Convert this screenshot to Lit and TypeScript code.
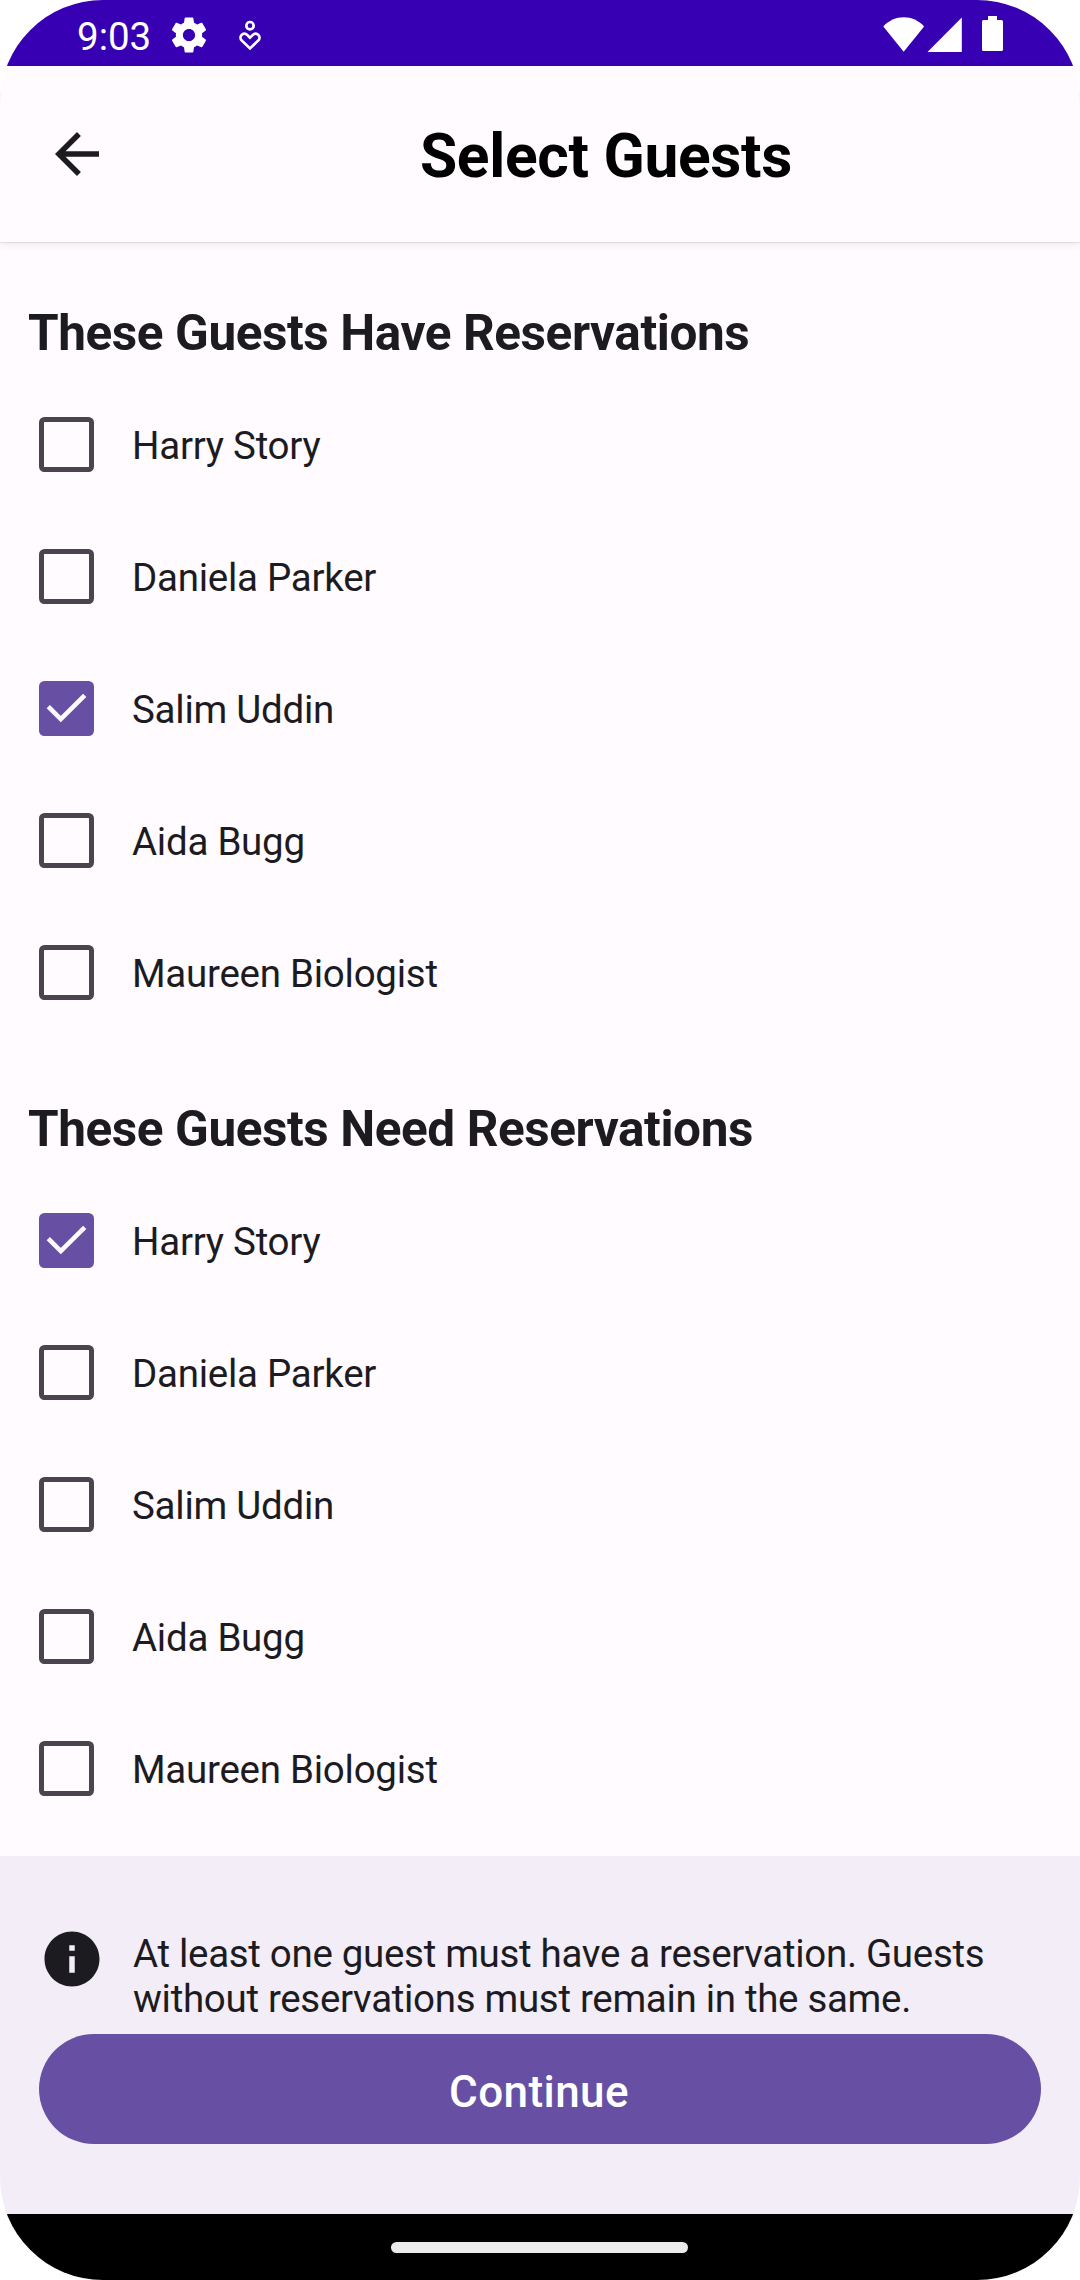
import { LitElement, html, css, nothing } from "lit";
import { customElement, property, state } from "lit/decorators.js";
import { classMap } from "lit/directives/class-map.js";

interface Guest {
  name: string;
  selected: boolean;
}

interface GuestGroup {
  title: string;
  guests: Guest[];
}

const NAMES = ["Harry Story", "Daniela Parker", "Salim Uddin", "Aida Bugg", "Maureen Biologist"];

const makeGroup = (title: string, selected: string): GuestGroup => ({
  title,
  guests: NAMES.map((name) => ({ name, selected: name === selected })),
});

@customElement("status-bar")
export class StatusBar extends LitElement {
  static styles = css`
    :host {
      display: flex;
      justify-content: space-between;
      height: 66px;
      padding: 0 77px;
      background: #3700b3;
      color: #fff;
    }
    .side {
      display: flex;
      align-items: flex-start;
    }
    .clock {
      width: 74px;
      margin-top: 14px;
      font-size: 38.5px;
      line-height: 45px;
      white-space: nowrap;
    }
    svg {
      display: block;
      fill: #fff;
    }
    .gear {
      margin: 14px 0 0 16.5px;
    }
    .care {
      margin: 14px 0 0 19px;
      fill: none;
      stroke: #fff;
      stroke-width: 2.7;
    }
    .wifi {
      margin-top: 17px;
    }
    .signal {
      margin: 17px 0 0 2px;
    }
    .battery {
      margin: 16px 0 0 20px;
    }
  `;

  render() {
    return html`
      <div class="side">
        <span class="clock">9:03</span>
        <svg class="gear" width="42" height="42" viewBox="0 0 24 24">
          <path
            d="M19.43 12.98c.04-.32.07-.64.07-.98s-.03-.66-.07-.98l2.11-1.65c.19-.15.24-.42.12-.64l-2-3.46c-.12-.22-.39-.3-.61-.22l-2.49 1c-.52-.4-1.08-.73-1.69-.98l-.38-2.65C14.46 2.18 14.25 2 14 2h-4c-.25 0-.46.18-.49.42l-.38 2.65c-.61.25-1.17.59-1.69.98l-2.49-1c-.23-.09-.49 0-.61.22l-2 3.46c-.13.22-.07.49.12.64l2.11 1.65c-.04.32-.07.65-.07.98s.03.66.07.98l-2.11 1.65c-.19.15-.24.42-.12.64l2 3.46c.12.22.39.3.61.22l2.49-1c.52.4 1.08.73 1.69.98l.38 2.65c.03.24.24.42.49.42h4c.25 0 .46-.18.49-.42l.38-2.65c.61-.25 1.17-.59 1.69-.98l2.49 1c.23.09.49 0 .61-.22l2-3.46c.12-.22.07-.49-.12-.64l-2.11-1.65zM12 15.5c-1.93 0-3.5-1.57-3.5-3.5s1.57-3.5 3.5-3.5 3.5 1.57 3.5 3.5-1.57 3.5-3.5 3.5z"
          />
        </svg>
        <svg class="care" width="42" height="42" viewBox="0 0 42 42">
          <circle cx="21" cy="11.7" r="3.7" />
          <path d="M21 23.7 L18.16 20.84 A3.9 3.9 0 0 0 12.64 26.36 L21 34.4 L29.36 26.36 A3.9 3.9 0 0 0 23.84 20.84 Z" />
        </svg>
      </div>
      <div class="side">
        <svg class="wifi" width="42" height="35" viewBox="0 0 42 35">
          <path d="M0.3 9.4 C5.6 3.4 13.2 0.2 20.7 0.2 S35.8 3.4 41.1 9.4 L20.7 34.7 Z" />
        </svg>
        <svg class="signal" width="35" height="35" viewBox="0 0 35 35">
          <path d="M0.5 35 L34.8 0.6 V35 Z" />
        </svg>
        <svg class="battery" width="21" height="35" viewBox="0 0 21 35">
          <path d="M6 0 H15 V4 H19.5 Q21 4 21 5.5 V33.5 Q21 35 19.5 35 H1.5 Q0 35 0 33.5 V5.5 Q0 4 1.5 4 H6 Z" />
        </svg>
      </div>
    `;
  }
}

@customElement("top-bar")
export class TopBar extends LitElement {
  @property() heading = "";

  static styles = css`
    :host {
      display: flex;
      align-items: flex-start;
      height: 176px;
      background: #fffbff;
      box-shadow: 0 1px 1px rgba(0, 0, 0, 0.07), 0 3px 8px rgba(0, 0, 0, 0.07);
      position: relative;
    }
    .back {
      display: block;
      margin: 55px 22px 0 44px;
      fill: #1c1b1f;
    }
    h1 {
      flex: 1;
      margin: 55px 0 0;
      text-align: center;
      font-size: 60.5px;
      font-weight: 700;
      line-height: 71px;
      letter-spacing: -0.3px;
      color: #000;
    }
  `;

  render() {
    return html`
      <svg class="back" width="66" height="66" viewBox="0 0 24 24">
        <path d="M20 11H7.83l5.59-5.59L12 4l-8 8 8 8 1.41-1.41L7.83 13H20v-2z" />
      </svg>
      <h1>${this.heading}</h1>
    `;
  }
}

@customElement("guest-row")
export class GuestRow extends LitElement {
  @property() name = "";
  @property({ type: Boolean }) selected = false;

  static styles = css`
    :host {
      display: flex;
      align-items: flex-start;
      height: 132px;
      padding-left: 39px;
      cursor: pointer;
    }
    .box {
      box-sizing: border-box;
      width: 55px;
      height: 55px;
      margin-top: 39px;
      border: 5px solid #49454f;
      border-radius: 5.5px;
    }
    .box.checked {
      border: 0;
      background: #6750a4;
    }
    .box svg {
      display: block;
      fill: none;
      stroke: #fffbff;
      stroke-width: 4.6;
    }
    .label {
      margin: 45px 0 0 38px;
      font-size: 38.5px;
      line-height: 45px;
      letter-spacing: -0.26px;
      color: #1c1b1f;
    }
  `;

  render() {
    return html`
      <div class=${classMap({ box: true, checked: this.selected })}>
        ${this.selected
          ? html`<svg width="55" height="55" viewBox="0 0 55 55"><path d="M9.3 25.6 L21.8 38.1 L45.7 14.3" /></svg>`
          : nothing}
      </div>
      <span class="label">${this.name}</span>
    `;
  }
}

@customElement("app-root")
export class AppRoot extends LitElement {
  @state() private groups: GuestGroup[] = [
    makeGroup("These Guests Have Reservations", "Salim Uddin"),
    makeGroup("These Guests Need Reservations", "Harry Story"),
  ];

  static styles = css`
    :host {
      display: block;
      background: #fff;
      font-family: Roboto, "Liberation Sans", sans-serif;
    }
    .screen {
      display: flex;
      flex-direction: column;
      width: 1080px;
      height: 2280px;
      overflow: hidden;
      border-radius: 103px;
      background: #fffbff;
    }
    .content {
      flex: 1;
    }
    h2 {
      margin: 0;
      padding: 62px 0 16px 28px;
      font-size: 49.5px;
      font-weight: 700;
      line-height: 58px;
      letter-spacing: -0.42px;
      color: #1c1b1f;
    }
    .footer {
      box-sizing: border-box;
      height: 358px;
      padding: 70px 39px 0;
      background: #f3edf7;
    }
    .note {
      display: flex;
      align-items: flex-start;
      height: 108px;
    }
    .info {
      display: block;
      fill: #1c1b1f;
    }
    .note p {
      margin: 5px 0 0 28px;
      font-size: 38.5px;
      line-height: 45px;
      letter-spacing: -0.315px;
      white-space: nowrap;
      color: #1c1b1f;
    }
    .continue {
      display: block;
      box-sizing: border-box;
      width: 100%;
      height: 110px;
      margin: 0;
      padding: 3px 2px 0 0;
      border: 0;
      border-radius: 55px;
      background: #6750a4;
      color: #fff;
      font: 500 44px / 110px Roboto, "Liberation Sans", sans-serif;
      letter-spacing: 0.43px;
      text-align: center;
    }
    .nav {
      display: flex;
      justify-content: center;
      height: 66px;
      padding-right: 1px;
      background: #000;
    }
    .handle {
      width: 297px;
      height: 11px;
      margin-top: 27.5px;
      border-radius: 5.5px;
      background: #ebebeb;
    }
  `;

  private toggle(group: number, index: number) {
    this.groups = this.groups.map((g, i) =>
      i !== group
        ? g
        : { ...g, guests: g.guests.map((p, j) => (j === index ? { ...p, selected: !p.selected } : p)) }
    );
  }

  render() {
    return html`
      <div class="screen">
        <status-bar></status-bar>
        <top-bar heading="Select Guests"></top-bar>
        <div class="content">
          ${this.groups.map(
            (group, i) => html`
              <h2>${group.title}</h2>
              ${group.guests.map(
                (guest, j) => html`<guest-row
                  .name=${guest.name}
                  .selected=${guest.selected}
                  @click=${() => this.toggle(i, j)}
                ></guest-row>`
              )}
            `
          )}
        </div>
        <div class="footer">
          <div class="note">
            <svg class="info" width="66" height="66" viewBox="0 0 24 24">
              <path d="M12 2C6.48 2 2 6.48 2 12s4.48 10 10 10 10-4.48 10-10S17.52 2 12 2zm1 15h-2v-6h2v6zm0-8h-2V7h2v2z" />
            </svg>
            <p>At least one guest must have a reservation. Guests<br />without reservations must remain in the same.</p>
          </div>
          <button class="continue">Continue</button>
        </div>
        <div class="nav"><div class="handle"></div></div>
      </div>
    `;
  }
}
